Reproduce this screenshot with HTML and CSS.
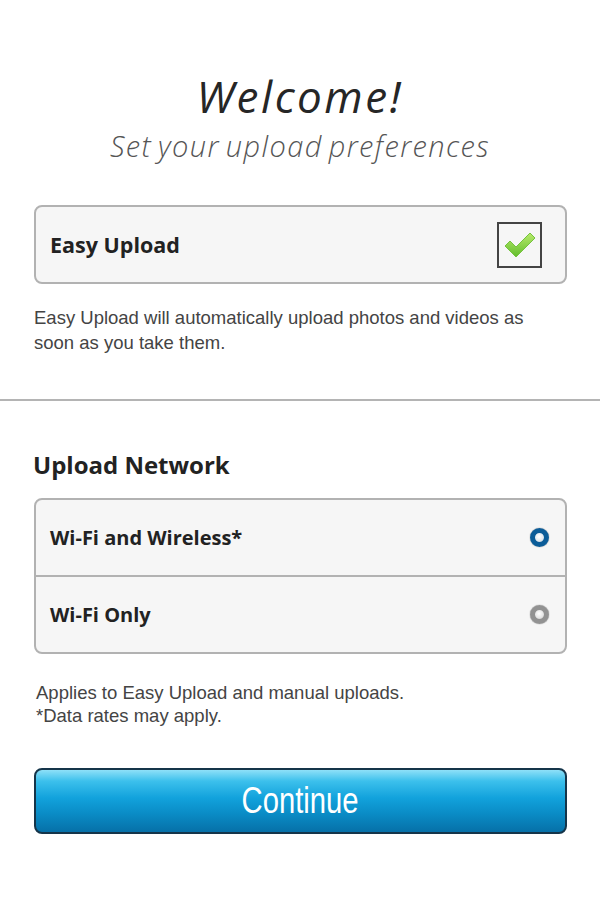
FILE: index.html
```html
<!DOCTYPE html>
<html lang="en">
<head>
    <meta charset="UTF-8">
    <meta name="viewport" content="width=device-width, initial-scale=1.0">
    <title>Upload Preferences</title>
    <link rel="stylesheet" href="styles.css">
</head>
<body>

    <div id="app">
        <div class="header">
            <h1 class="title">Welcome!</h1>
            <p class="subtitle">Set your upload preferences</p>
        </div>

        <div class="section">
            <div class="option-box">
                <div class="option-row check-row">
                    <span class="option-label big-label">Easy Upload</span>
                    <span class="checkbox">
                        <svg width="34" height="28" viewBox="0 0 34 28">
                            <defs>
                                <linearGradient id="tick" x1="0" y1="0" x2="0" y2="1">
                                    <stop offset="0" stop-color="#b8ea6c"/>
                                    <stop offset="1" stop-color="#62bd2c"/>
                                </linearGradient>
                            </defs>
                            <path d="M2 15 L7 10 L13 16 L27 2 L32 7 L13 26 Z" fill="url(#tick)" stroke="#74c23e" stroke-width="1" stroke-linejoin="round"/>
                        </svg>
                    </span>
                </div>
            </div>
            <p class="note top-note">Easy Upload will automatically upload photos and videos as soon as you take them.</p>
        </div>

        <hr class="divider">

        <div class="section">
            <h2 class="section-title">Upload Network</h2>
            <div class="option-box">
                <div class="option-row">
                    <span class="option-label">Wi-Fi and Wireless*</span>
                    <span class="radio radio-on"></span>
                </div>
                <div class="option-row">
                    <span class="option-label">Wi-Fi Only</span>
                    <span class="radio"></span>
                </div>
            </div>
            <p class="note small-note">Applies to Easy Upload and manual uploads.<br>*Data rates may apply.</p>

            <button class="continue"><span class="continue-text">Continue</span></button>
        </div>
    </div>

</body>
</html>
```

FILE: styles.css
```css
/* Basic styling */
body {
    margin: 0;
    background-color: #ffffff;
    font-family: "Liberation Sans", Arial, sans-serif;
}

#app {
    width: 600px;
}

.header {
    padding-top: 70px;
    text-align: center;
}

.title {
    margin: 0;
    font-family: "Open Sans", sans-serif;
    font-style: italic;
    font-weight: 400;
    font-size: 44px;
    line-height: 52px;
    color: #262626;
    letter-spacing: 2.5px;
}

.subtitle {
    margin: 6px 0 0;
    font-family: "Open Sans", sans-serif;
    font-style: italic;
    font-weight: 300;
    font-size: 29px;
    line-height: 36px;
    color: #555;
    letter-spacing: 1.4px;
    word-spacing: -3px;
}

.section {
    padding: 0 33px 0 34px;
}

.header + .section {
    padding-top: 41px;
}

.option-box {
    background-color: #f6f6f6;
    border: 2px solid #b2b2b2;
    border-radius: 8px;
}

.option-row {
    display: flex;
    align-items: center;
    justify-content: space-between;
    height: 75px;
    padding: 0 16px 0 14px;
}

.check-row {
    padding-right: 23px;
}

.option-row + .option-row {
    border-top: 2px solid #b2b2b2;
}

.option-label {
    font-family: "Open Sans", sans-serif;
    font-weight: 700;
    font-size: 20px;
    color: #222;
}

.big-label {
    font-size: 21.5px;
}

.checkbox {
    display: flex;
    align-items: center;
    justify-content: center;
    width: 41px;
    height: 42px;
    border: 2px solid #444;
}

.radio {
    width: 9px;
    height: 9px;
    border-radius: 50%;
    border: 5px solid #929292;
    background: radial-gradient(circle at 45% 40%, #ffffff 0%, #e4e4e4 60%, #b8b8b8 100%);
    box-shadow: 0 0 1px #555;
}

.radio-on {
    border-color: #0b5c98;
    background: radial-gradient(circle at 45% 40%, #ffffff 0%, #dfe8ef 60%, #9fb8cc 100%);
}

.note {
    margin: 21px 0 0;
    font-size: 18.5px;
    line-height: 25px;
    color: #444;
}

.top-note {
    max-width: 505px;
}

.divider {
    margin: 44px 0 0;
    border: none;
    border-top: 2px solid #b4b4b4;
}

.section-title {
    margin: 49px 0 18px -1px;
    font-family: "Open Sans", sans-serif;
    font-weight: 700;
    font-size: 24px;
    line-height: 30px;
    color: #222;
}

.small-note {
    margin-top: 27px;
    padding-left: 2px;
    line-height: 23px;
}

.continue {
    display: block;
    width: 100%;
    height: 66px;
    margin-top: 41px;
    border: 2px solid #15354a;
    border-radius: 8px;
    background: linear-gradient(#8ee0f8 0%, #3cc0ec 18%, #12a2dc 45%, #0a8cc6 70%, #0670a8 100%);
    color: #fff;
    cursor: pointer;
}

.continue-text {
    display: inline-block;
    font-family: "Liberation Sans", Arial, sans-serif;
    font-size: 37px;
    transform: scaleX(0.79);
}
```
